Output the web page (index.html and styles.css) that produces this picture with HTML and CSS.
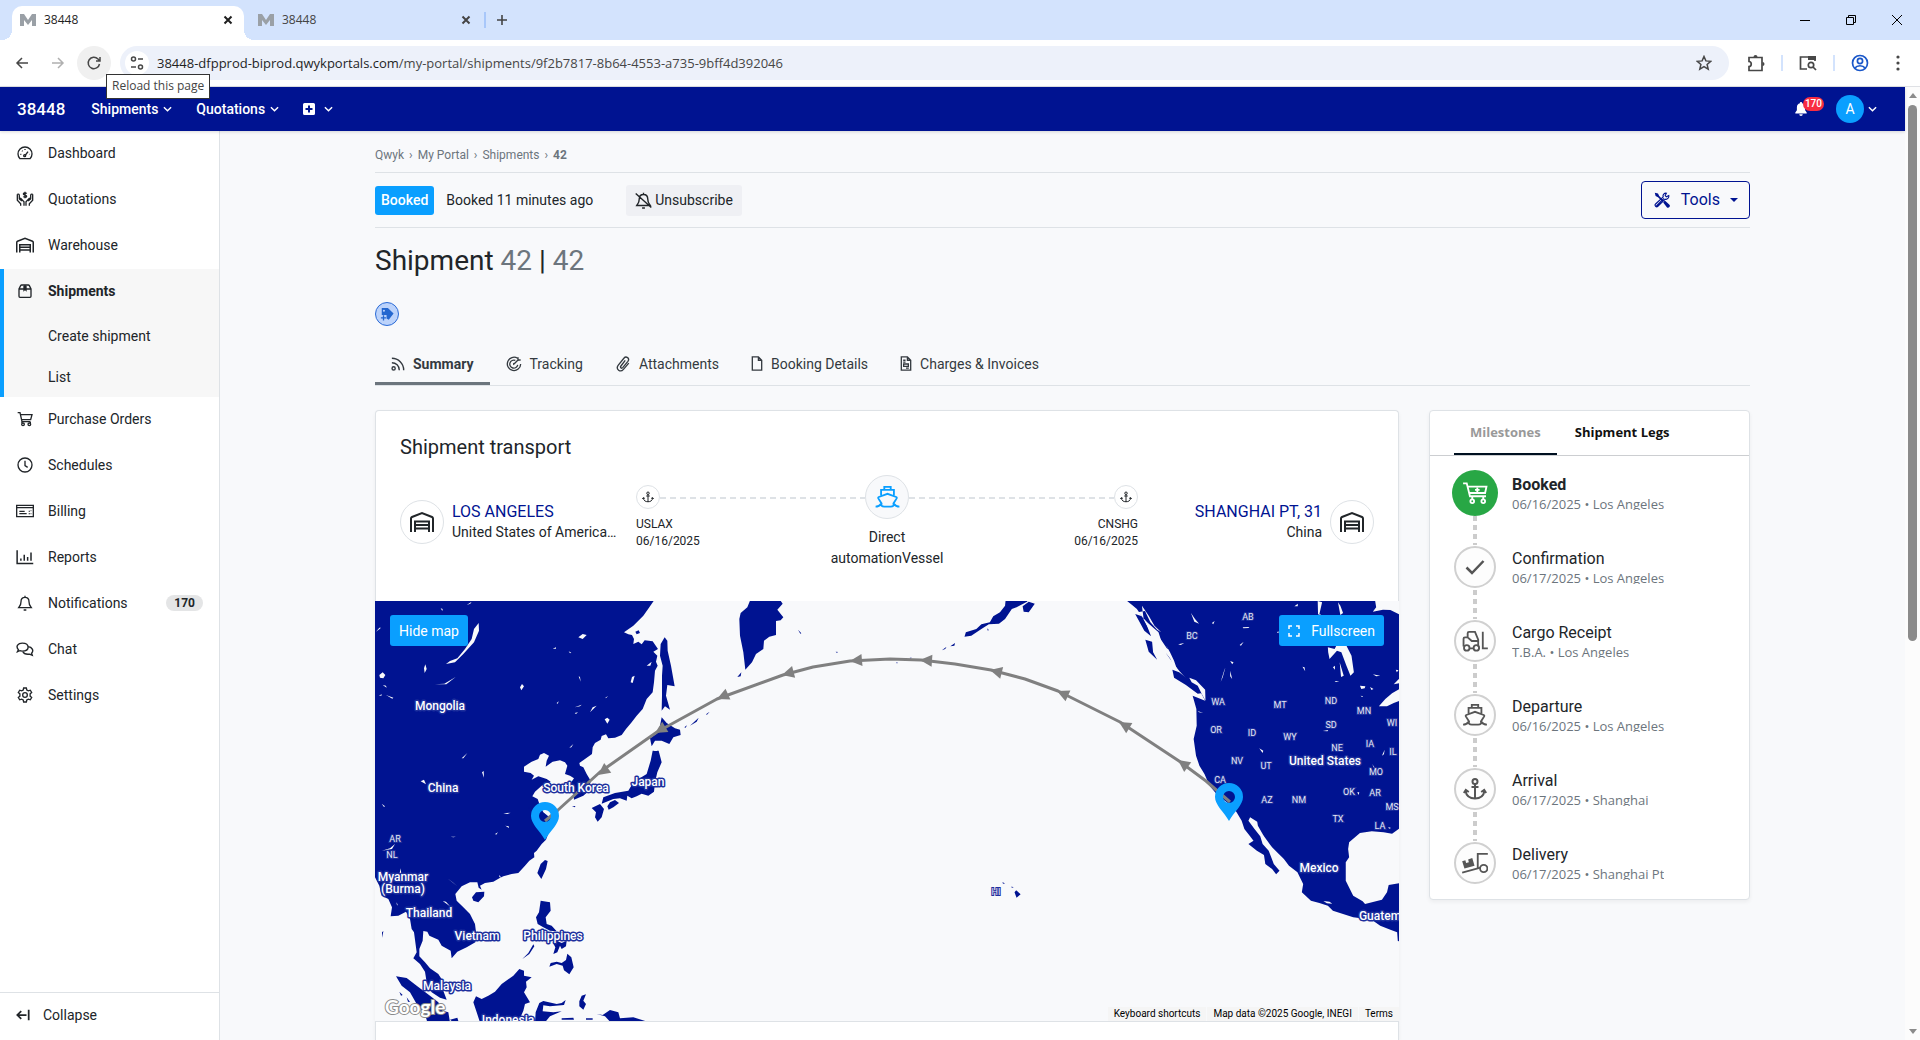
FILE: index.html
```html
<!DOCTYPE html>
<html lang="en">
<head>
<meta charset="utf-8">
<meta name="viewport" content="width=device-width, initial-scale=1">
<title>38448</title>
<link rel="stylesheet" href="styles.css">
</head>
<body>
<svg class="sprite" aria-hidden="true">
  <symbol id="i-favicon" viewBox="0 0 16 12"><path d="M0 12V0h4l4 6 4-6h4v12h-4V6l-4 5-4-5v6z" fill="currentColor"/></symbol>
  <symbol id="i-close" viewBox="0 0 10 10"><path d="M1.500 1.500l7 7M8.500 1.500l-7 7"/></symbol>
  <symbol id="i-plus" viewBox="0 0 12 12"><path d="M6 1v10M1 6h10"/></symbol>
  <symbol id="i-left" viewBox="0 0 16 16"><path d="M14 8H3M8 3L3 8l5 5"/></symbol>
  <symbol id="i-right" viewBox="0 0 16 16"><path d="M2 8h11M8 3l5 5-5 5"/></symbol>
  <symbol id="i-reload" viewBox="0 0 16 16"><path d="M13.500 9A5.700 5.700 0 1 1 12 4l1.500 1.500M14 2v4h-4"/></symbol>
  <symbol id="i-site" viewBox="0 0 16 16"><circle cx="4.500" cy="4" r="2"/><path d="M9 4h5M2 12h5"/><circle cx="11.500" cy="12" r="2"/></symbol>
  <symbol id="i-star" viewBox="0 0 16 16"><path d="M8 1.500l1.900 4.400 4.800.4-3.600 3.200 1.100 4.700L8 11.700l-4.200 2.500 1.100-4.700L1.300 6.300l4.800-.4z"/></symbol>
  <symbol id="i-puzzle" viewBox="0 0 18 18"><path d="M2 3.500h13V8v5 3.500H2v-4c3 0 3-5 0-5z"/><path d="M6.500 3a2 2 0 0 1 4 0zM15.500 8a2 2 0 0 1 0 4z" fill="currentColor" stroke="none"/></symbol>
  <symbol id="i-panel" viewBox="0 0 18 18"><path d="M8 15H1.500V3h14.500v4"/><path d="M9 2h8v4H9z" fill="currentColor" stroke="none"/><circle cx="12" cy="11" r="2.700"/><path d="M14 13l3 3"/></symbol>
  <symbol id="i-user" viewBox="0 0 18 18"><circle cx="9" cy="9" r="7.500"/><circle cx="9" cy="7" r="2.600"/><path d="M4 14c2-3 8-3 10 0"/></symbol>
  <symbol id="i-dots" viewBox="0 0 4 16"><g fill="currentColor" stroke="none"><circle cx="2" cy="2" r="1.600"/><circle cx="2" cy="8" r="1.600"/><circle cx="2" cy="14" r="1.600"/></g></symbol>
  <symbol id="i-min" viewBox="0 0 10 10"><path d="M0 5.500h10"/></symbol>
  <symbol id="i-restore" viewBox="0 0 10 10"><path d="M.5 2.500h7v7h-7zM2.500 2.500v-2h7v7h-2"/></symbol>
  <symbol id="i-x" viewBox="0 0 10 10"><path d="M0 0l10 10M10 0L0 10"/></symbol>
  <symbol id="i-chev" viewBox="0 0 10 6"><path d="M1 1l4 4 4-4"/></symbol>
  <symbol id="i-addbox" viewBox="0 0 12 12"><path fill-rule="evenodd" fill="currentColor" stroke="none" d="M1.500 0h9A1.500 1.500 0 0 1 12 1.500v9a1.500 1.500 0 0 1-1.500 1.500h-9A1.500 1.500 0 0 1 0 10.500v-9A1.500 1.500 0 0 1 1.500 0zM5 2.500V5H2.500v2H5v2.500h2V7h2.500V5H7V2.500z"/></symbol>
  <symbol id="i-bellfill" viewBox="0 0 14 16"><path fill="currentColor" stroke="none" d="M7 0a1.200 1.200 0 0 0-1.200 1.500C3.500 2 2.300 3.800 2.300 6v3.500L.5 12v1h13v-1l-1.800-2.500V6c0-2.200-1.200-4-3.500-4.500A1.200 1.200 0 0 0 7 0zM5 14a2 2 0 0 0 4 0z"/></symbol>
  <symbol id="i-gauge" viewBox="0 0 24 24"><path d="M4.500 20.500C3 19 1.500 16.500 1.500 13.500a10.500 10.500 0 0 1 21 0c0 3-1.500 5.500-3 7z"/><path d="M12 16l4.500-6"/><circle cx="11.500" cy="16" r="1.500"/><path d="M5 14h1.500M7.500 8.500l1 1M12 6v1.500M18.500 14h.5"/></symbol>
  <symbol id="i-hands" viewBox="0 0 27 24"><path d="M2 5v9l5 5v3M2 5c2-1 3 0 3 2v5l4 3M25 5v9l-5 5v3M25 5c-2-1-3 0-3 2v5l-4 3M5 12l2-1 5 5v6M22 12l-2-1-5 5v6"/><path d="M16 4c-1-1.500-5-1.500-5 .5s5 1.200 5 3.300-4 2.200-5 .5M13.500 1v10"/></symbol>
  <symbol id="i-ware" viewBox="0 0 24 20"><path d="M1 20V6.500Q1 5.500 2 5l10-4 10 4q1 .5 1 1.500V20"/><path d="M5 20V9.500h14V20M5 13h14M5 16.500h14"/></symbol>
  <symbol id="i-box" viewBox="0 0 24 24"><path d="M3 9v11q0 1.500 1.500 1.500h15q1.500 0 1.500-1.500V9l-2.500-5q-.5-1-1.500-1H7q-1 0-1.500 1zM3 9h18M12 3v6"/><path d="M9.500 4h5v9L12 11l-2.500 2z" fill="currentColor" stroke="none"/></symbol>
  <symbol id="i-cart" viewBox="0 0 24 24"><path d="M1 2.500h3.500l3 13.500h12.500M5.500 5.500H22.500l-2 7.500H7"/><circle cx="9" cy="20" r="2"/><circle cx="18.500" cy="20" r="2"/><path d="M7.500 16v2M20 16v2"/></symbol>
  <symbol id="i-cartplus" viewBox="0 0 28 24"><path d="M1 1.500h4l3.500 14H26M6 5h20.500L25 12H7.500"/><circle cx="11" cy="21" r="2"/><circle cx="23" cy="21" r="2"/><path d="M11 19V16M23 19V16M16.500 6v5M14 8.500h5"/></symbol>
  <symbol id="i-clock" viewBox="0 0 24 24"><circle cx="12" cy="12" r="10.500"/><path d="M12 5.500V13l4 2.500"/></symbol>
  <symbol id="i-bill" viewBox="0 0 27 19"><path d="M1 1h25v17H1zM1 4.500h25M5 10h8M5 13.500h11M20 9v1.500M20 13v1.500M22 9h1M22 13.500h1"/></symbol>
  <symbol id="i-chart" viewBox="0 0 24 20"><path d="M1.500 1v17.500H23M6.500 15v-3M11 15V7M15.500 15v-5M20 15V4"/></symbol>
  <symbol id="i-bell" viewBox="0 0 24 24"><path d="M12 3.500c-4 0-6 3-6 6.500 0 5-1.500 6-3.500 9h19c-2-3-3.500-4-3.500-9 0-3.500-2-6.500-6-6.500zM12 1v2.500M10 22.500h4"/></symbol>
  <symbol id="i-belloff" viewBox="0 0 24 24"><path d="M12 3.500c-4 0-6 3-6 6.500 0 5-1.500 6-3.500 9h19c-2-3-3.500-4-3.500-9 0-3.500-2-6.500-6-6.500zM12 1v2.500M10 22.500h4M1 2l22 20"/></symbol>
  <symbol id="i-chat" viewBox="0 0 26 20"><path d="M2 14l1.500-3C-1 6 3 1.500 9 1.500c5 0 8.500 2.500 8.500 6S14 13 9 13c-1.500 0-2.500 0-3.500-.5z"/><path d="M10 14c1 2.500 5 4 9.500 3.500l4 1.500-1-3c3.500-3.500 1-9-5-9.500"/></symbol>
  <symbol id="i-gear" viewBox="0 0 24 24"><circle cx="12" cy="12" r="3.500"/><path d="M10 1.500h4l.7 3 2.300 1.300 3-1 2 3.500-2.300 2v3.400l2.300 2-2 3.500-3-1-2.300 1.300-.7 3h-4l-.7-3L7 18.200l-3 1-2-3.500 2.300-2v-3.400L2 8.300l2-3.500 3 1 2.300-1.300z"/></symbol>
  <symbol id="i-collapse" viewBox="0 0 16 14"><path d="M12 7H1.500M6 2.500L1.500 7 6 11.500M14.500 1v12"/></symbol>
  <symbol id="i-tools" viewBox="0 0 20 20"><g fill="currentColor" stroke="none"><path d="M1 1l4 1 1.500 3L12 10.500 10.500 12 5 6.500 2 5z"/><path d="M11.500 13l2-2.500 5.500 5a2 2 0 0 1-3 3.500z"/></g><path d="M3 17.500L12.500 8M18.500 4.500l-3 1.500-1.500-1.500 1.500-3c-2.500-.5-5 2-4 4.500L2 15a1.800 1.800 0 0 0 2.800 2.800L14 9c2.500 1 5-2 4.500-4.500z"/></symbol>
  <symbol id="i-tag" viewBox="0 0 16 16"><path fill-rule="evenodd" fill="currentColor" stroke="none" d="M2 1h7l6.500 6.500L10 14.500 7.500 13V9H2zM4.500 3a1.200 1.200 0 1 0 0 2.400 1.200 1.200 0 0 0 0-2.400z"/><path stroke-width="1.500" d="M1 12.500h6M4 9.500v6"/></symbol>
  <symbol id="i-rss" viewBox="0 0 16 16"><path d="M1 1.500A13.500 13.500 0 0 1 14.500 15M1 6.500A8.500 8.500 0 0 1 9.500 15"/><circle cx="3" cy="13" r="1.800"/></symbol>
  <symbol id="i-target" viewBox="0 0 18 18"><path d="M13 2.500A7.500 7.500 0 1 0 16.500 9M10.500 5A4.500 4.500 0 1 0 13.200 10M9 9l4.500-4.500M9 9.800a1 1 0 0 1 0-1.600M13.500 4.500V1.500M13.500 4.500h3"/></symbol>
  <symbol id="i-clip" viewBox="0 0 16 18"><path d="M10.500 5L5.500 11.500c-1 1.500 1 3 2.200 1.600L13.500 6c2.500-3.500-2-6.500-4.500-3.500L2.500 10.500c-3 4.500 2.500 8.500 6 4.500L14.500 8"/></symbol>
  <symbol id="i-doc" viewBox="0 0 12 16"><path d="M1 1h6.500L11 4.500V15H1zM7.500 1v3.500H11"/></symbol>
  <symbol id="i-invoice" viewBox="0 0 12 16"><path d="M1 1h6.500L11 4.500V15H1zM7.500 1v3.500H11M3 4.500h2.500M3 6.500h2.500M3.500 8.500h5v2.500h-5zM6 13h3"/></symbol>
  <symbol id="i-ship" viewBox="0 0 28 24"><path d="M10.500 4V1h7v3M7 10V4.200h14V10M4.500 12L14 8.500 23.500 12q1 .5.500 1.500L20.500 19q1 3.500-3 3.500h-7q-4 0-3-3.500L4 13.500q-.5-1 .5-1.500zM1 22.500q4 0 6-3M27 22.500q-4 0-6-3"/></symbol>
  <symbol id="i-anchor" viewBox="0 0 24 22"><circle cx="12" cy="3.500" r="2.500"/><path d="M12 6v15M8.500 9h7M2.500 13C3.500 18.500 7 20.500 12 20.500s8.500-2 9.500-7.500M.8 15l2-3 3 2M23.200 15l-2-3-3 2"/></symbol>
  <symbol id="i-check" viewBox="0 0 20 16"><path d="M1.500 8.500L7 14 18.500 2"/></symbol>
  <symbol id="i-fork" viewBox="0 0 28 24"><circle cx="5" cy="19.500" r="3"/><circle cx="15.500" cy="19.500" r="3"/><path d="M8 20h4.500M1.500 18V9.500Q1.500 8 3 8h3V3.500Q6 2 7.500 2h6.500l3.500 8.500V18M6 8l4.500 4h7M22.500 2v18H28"/></symbol>
  <symbol id="i-dolly" viewBox="0 0 28 24"><path d="M0 22.500L20 17M17 17.500V2h11"/><circle cx="23.500" cy="18" r="4"/><path fill="currentColor" stroke="none" d="M0 10l3.500-1 .8 3 3-.8-.8-3L11 6.500l2.500 8.500-11 3z"/></symbol>
  <symbol id="i-expand" viewBox="0 0 12 12"><path d="M1 4V1h3M8 1h3v3M11 8v3H8M4 11H1V8"/></symbol>
</svg>

<header class="browser">
  <div class="tabstrip">
    <div class="btab active"><svg class="ic fav"><use href="#i-favicon"/></svg><span>38448</span><button class="ghost" aria-label="Close tab"><svg class="ic s10 heavy"><use href="#i-close"/></svg></button></div>
    <div class="btab"><svg class="ic fav"><use href="#i-favicon"/></svg><span>38448</span><button class="ghost" aria-label="Close tab"><svg class="ic s10 heavy"><use href="#i-close"/></svg></button></div>
    <button class="ghost newtab" aria-label="New tab"><svg class="ic s12"><use href="#i-plus"/></svg></button>
    <div class="winctl">
      <button class="ghost" aria-label="Minimize"><svg class="ic s10 thin"><use href="#i-min"/></svg></button>
      <button class="ghost" aria-label="Restore"><svg class="ic s10 thin"><use href="#i-restore"/></svg></button>
      <button class="ghost" aria-label="Close"><svg class="ic s10 thin"><use href="#i-x"/></svg></button>
    </div>
  </div>
  <div class="toolbar">
    <button class="round" aria-label="Back"><svg class="ic s16"><use href="#i-left"/></svg></button>
    <button class="round dim" aria-label="Forward"><svg class="ic s16"><use href="#i-right"/></svg></button>
    <div class="reload"><button class="round hover" aria-label="Reload"><svg class="ic s16"><use href="#i-reload"/></svg></button><span class="tooltip" role="tooltip">Reload this page</span></div>
    <div class="omnibox"><span class="site"><svg class="ic s16"><use href="#i-site"/></svg></span><span class="url"><b>38448-dfpprod-biprod.qwykportals.com</b>/my-portal/shipments/9f2b7817-8b64-4553-a735-9bff4d392046</span><button class="ghost" aria-label="Bookmark"><svg class="ic s16"><use href="#i-star"/></svg></button></div>
    <div class="exts">
      <svg class="ic s18"><use href="#i-puzzle"/></svg><i></i><svg class="ic s18"><use href="#i-panel"/></svg><i></i><svg class="ic s18 blue"><use href="#i-user"/></svg><svg class="ic dots"><use href="#i-dots"/></svg>
    </div>
  </div>
</header>

<div class="viewport">
  <div class="app">
    <nav class="topbar" aria-label="Main">
      <a class="brand" href="#">38448</a>
      <button class="navbtn">Shipments <svg class="ic chev"><use href="#i-chev"/></svg></button>
      <button class="navbtn">Quotations <svg class="ic chev"><use href="#i-chev"/></svg></button>
      <button class="navbtn wide" aria-label="Add"><svg class="ic s12"><use href="#i-addbox"/></svg><svg class="ic chev"><use href="#i-chev"/></svg></button>
      <button class="alerts" aria-label="Notifications"><svg class="ic s14"><use href="#i-bellfill"/></svg><span class="count">170</span></button>
      <button class="account" aria-label="Account"><span class="avatar">A</span><svg class="ic chev"><use href="#i-chev"/></svg></button>
    </nav>
    <div class="body">
      <aside class="side">
        <ul class="menu">
          <li><a href="#"><svg class="ic s18"><use href="#i-gauge"/></svg>Dashboard</a></li>
          <li><a href="#"><svg class="ic s18"><use href="#i-hands"/></svg>Quotations</a></li>
          <li><a href="#"><svg class="ic s18"><use href="#i-ware"/></svg>Warehouse</a></li>
          <li class="open"><a href="#"><svg class="ic s18 pkg"><use href="#i-box"/></svg>Shipments</a>
            <ul class="sub"><li><a href="#">Create shipment</a></li><li><a href="#">List</a></li></ul></li>
          <li><a href="#"><svg class="ic s18"><use href="#i-cart"/></svg>Purchase Orders</a></li>
          <li><a href="#"><svg class="ic s18 pkg"><use href="#i-clock"/></svg>Schedules</a></li>
          <li><a href="#"><svg class="ic s18"><use href="#i-bill"/></svg>Billing</a></li>
          <li><a href="#"><svg class="ic s18 pkg"><use href="#i-chart"/></svg>Reports</a></li>
          <li><a href="#"><svg class="ic s18 pkg"><use href="#i-bell"/></svg>Notifications<span class="pill">170</span></a></li>
          <li><a href="#"><svg class="ic s18"><use href="#i-chat"/></svg>Chat</a></li>
          <li><a href="#"><svg class="ic s18 pkg"><use href="#i-gear"/></svg>Settings</a></li>
        </ul>
        <button class="collapse"><svg class="ic s14"><use href="#i-collapse"/></svg>Collapse</button>
      </aside>
      <main class="content">
        <nav class="crumbs" aria-label="Breadcrumb"><a href="#">Qwyk</a><span>›</span><a href="#">My Portal</a><span>›</span><a href="#">Shipments</a><span>›</span><b>42</b></nav>
        <div class="status">
          <span class="badge">Booked</span><span class="when">Booked 11 minutes ago</span>
          <button class="unsub"><svg class="ic s18"><use href="#i-belloff"/></svg>Unsubscribe</button>
          <button class="tools"><svg class="ic s18"><use href="#i-tools"/></svg>Tools<span class="caret"></span></button>
        </div>
        <h1>Shipment <em>42</em> | <em>42</em></h1>
        <button class="tagbtn" aria-label="Add tag"><svg class="ic s14"><use href="#i-tag"/></svg></button>
        <nav class="tabs" aria-label="Shipment sections">
          <a class="on" href="#"><svg class="ic rss"><use href="#i-rss"/></svg>Summary</a>
          <a href="#"><svg class="ic s16"><use href="#i-target"/></svg>Tracking</a>
          <a href="#"><svg class="ic s16"><use href="#i-clip"/></svg>Attachments</a>
          <a href="#"><svg class="ic page"><use href="#i-doc"/></svg>Booking Details</a>
          <a href="#"><svg class="ic page"><use href="#i-invoice"/></svg>Charges &amp; Invoices</a>
        </nav>
        <div class="cols">
          <div class="left">
            <section class="card transport">
              <h2>Shipment transport</h2>
              <div class="route">
                <div class="place"><span class="ring"><svg class="ic s24"><use href="#i-ware"/></svg></span><div class="names"><a href="#">LOS ANGELES</a><p>United States of America…</p></div></div>
                <div class="legs">
                  <div class="stop"><span class="dot"><svg class="ic s12"><use href="#i-anchor"/></svg></span><p>USLAX<br>06/16/2025</p></div>
                  <i class="dash"></i>
                  <div class="vessel"><span class="ring"><svg class="ic s28"><use href="#i-ship"/></svg></span><p>Direct<br>automationVessel</p></div>
                  <i class="dash"></i>
                  <div class="stop end"><span class="dot"><svg class="ic s12"><use href="#i-anchor"/></svg></span><p>CNSHG<br>06/16/2025</p></div>
                </div>
                <div class="place end"><div class="names"><a href="#">SHANGHAI PT, 31</a><p>China</p></div><span class="ring"><svg class="ic s24"><use href="#i-ware"/></svg></span></div>
              </div>
              <div class="map">
                <svg class="world" viewBox="0 0 1024 420" preserveAspectRatio="xMidYMid slice" role="img" aria-label="Route from Los Angeles to Shanghai">
                  <g transform="translate(-5 -2) scale(.33333)">
                    <g class="land">
                      <path d="M0 0H855L838 25 820 50 790 80 762 100 775 106 786 108 792 120 790 135 805 128 815 136 824 124 848 127 864 150 850 158 862 170 858 188 863 200 855 215 852 250 848 280 830 300 818 330 800 350 785 370 768 390 755 408 735 416 715 418 708 406 695 411 692 422 675 432 668 445 666 465 645 480 628 492 630 500 640 505 650 525 662 545 657 575 640 590 612 602 610 580 600 555 612 538 600 530 585 525 592 500 585 490 570 484 548 488 527 503 530 485 537 470 522 462 510 467 505 480 485 488 462 503 462 518 482 522 492 530 485 542 505 532 530 540 542 548 515 560 495 578 487 592 503 600 510 620 520 640 545 660 540 690 528 722 515 735 500 755 492 762 493 775 478 785 465 800 445 822 425 825 400 832 388 838 370 848 345 852 330 860 335 872 326 866 322 850 300 850 275 862 256 885 260 905 280 925 300 945 315 975 318 1000 316 1030 290 1045 262 1058 245 1078 242 1055 215 1040 205 1022 178 1010 172 998 160 996 158 1025 148 1050 148 1072 165 1090 180 1108 205 1125 218 1145 218 1170 230 1202 210 1196 185 1180 170 1150 165 1118 150 1095 130 1078 140 1060 132 1000 125 990 120 960 108 938 85 950 62 952 66 925 55 900 35 890 28 860 15 835 0 800z"/>
                      <path d="M78 1132L110 1137 140 1160 180 1190 205 1210 218 1235 235 1240 240 1270H172L165 1245 140 1215 120 1180 95 1160zM310 1210L318 1192 335 1200 355 1190 375 1178 395 1155 430 1130 448 1110 462 1115 462 1130 485 1135 468 1148 470 1165 462 1180 480 1210 465 1215 460 1235 445 1270H330L320 1240zM495 1270L497 1240 508 1212 520 1206 560 1215 575 1212 587 1203 582 1218 540 1222 520 1219 518 1237 550 1240 575 1237 540 1252 525 1270zM680 1245L698 1248 720 1233 745 1240 750 1258 790 1255 832 1268H720L705 1252zM628 1207L635 1190 648 1186 640 1205 648 1215 640 1232 628 1222zM575 1258L610 1256 612 1262 575 1262zM648 1258L668 1258 668 1262 648 1262z"/>
                      <path d="M502 822L512 795 525 783 533 786 528 810 514 840zM306 895L318 880 343 878 342 892 325 910 310 905zM512 905L540 910 542 935 527 955 530 975 545 980 560 997 540 995 520 985 503 975 498 955 507 940zM538 1103L542 1092 560 1088 575 1092 588 1083 592 1064 604 1075 611 1105 598 1126 582 1114 578 1100 560 1095zM457 1080L475 1062 490 1036 493 1042 478 1065zM548 1030L560 1025 575 1032 590 1025 588 1042 575 1050 570 1040 562 1060 550 1065 556 1045zM88 1178l10 10-5 2zM110 1195l10 14-6-1zM36 1000l4-4-3 20zM240 1262L262 1256 265 1266 245 1266z"/>
                      <path d="M875 355L890 372 915 388 930 392 932 408 910 415 898 435 875 425 855 425 845 442 840 418 862 402 870 380zM848 455L866 455 875 490 862 520 855 550 852 578 835 590 815 584 800 592 785 598 772 590 770 605 750 598 730 600 695 614 700 595 735 582 775 575 790 550 830 525 842 485zM665 627L690 615 702 630 695 655 683 668 675 655 678 640zM712 622L720 610 735 603 747 612 730 625 716 632zM884 115L892 125 893 155 903 200 914 262 892 258 888 290 900 332 885 322 875 335 876 290 876 230 878 200 870 170 872 135zM606 622l10-1-1 4zM1142 0H1228L1238 14 1222 32 1240 55 1232 64 1218 66 1218 108 1198 113 1182 125 1180 150 1158 165 1146 190 1126 212 1120 160 1110 110 1108 60 1112 42 1132 25zM1102 234L1114 220 1112 232zM960 380l26-24-6 12zM943 385l8-6-4 7zM1008 346l11-8-8 9zM1284 92l10 11-3 1zM1397 158l8 1-5 2zM796 98l10-4 4 8-10 4zM475 625h4v3h-4z"/>
                    </g>
                    <g class="water">
                      <path d="M326 72L327 95 312 130 280 165 255 190 228 195 240 186 262 178 285 150 305 120 312 90zM28 228L38 220 46 228 40 238 30 236zM166 196L170 210 164 222 162 208zM195 256l28-2 34-20-28 22zM290 18l15-10-4 6zM212 28l6 2-1 6zM18 98l10-12 5 0-5 5zM38 258l10 2 2 6zM26 292l8-6 2 3zM48 288l22 8-3 3zM625 115L638 105 650 108 638 120zM450 265L456 255 462 262 454 274zM626 232l4 2 2 14zM548 149l10-4 0 4zM596 157l8 4-4 2zM782 250L786 234 794 230 788 252zM830 200l15-12-4 12zM614 325L635 317 630 322zM660 340L668 325 680 320zM704 361L712 356 719 362 712 374zM598 446l12-11-6 10zM614 342l10-2-6 5zM560 312l7-5-5 8zM706 296l8-5-6 7zM336 520l5-4 1 20zM275 478L292 462 280 478zM152 547L162 542 168 556zM400 643l22-2-10 4zM376 704l8-4-6 8zM406 680l10 2 1 5zM242 713l16 0-8 2zM36 755L60 748 75 735 66 750zM232 838L248 850 262 862zM218 906l10 2 12 14zM35 614l10 8-3 2zM92 808l2 18-5-4zM80 910l4 10-4-4zM850 452l8-4 4 8-8 0zM388 828l6 8-6-2z"/>
                    </g>
                  </g>
                  <g transform="translate(505 -2) scale(.338 .33333)">
                    <g class="land">
                      <path d="M372 0H440L435 8 404 25 390 30 370 60 352 74 322 76 300 90 270 110 250 113 254 100 285 90 300 76 325 70 335 52 355 40 370 20zM422 22L440 8 458 14 440 40 425 38zM183 154l14-11-4 7zM208 142l14-10-2 8zM48 190l6 2-5 1zM88 176l6 0-3 3zM317 88l5 5-3 2zM398 880L403 874 416 886 404 896zM362 850l8 3-6 1zM387 863l9 1-5 2z"/>
                      <path d="M724 0H1464L1468 25 1458 38 1488 32 1510 33 1540 48V686L1515 704 1490 700 1455 697 1420 702 1388 730 1385 750 1388 775 1378 790 1378 845 1400 890 1428 907 1435 915 1485 902 1500 880 1505 858 1540 852V1028L1532 1026 1530 1000 1510 992 1480 980 1460 966 1440 960 1400 955 1340 935 1325 920 1300 912 1275 905 1248 880 1252 855 1235 820 1210 800 1195 780 1180 765 1160 745 1135 710 1118 680 1116 668 1095 655 1090 665 1108 690 1125 712 1132 735 1150 755 1165 795 1182 815 1172 826 1160 810 1140 795 1136 768 1115 755 1090 735 1105 725 1092 708 1078 690 1070 665 1055 640 1040 620 1000 590 975 560 960 525 945 500 935 470 928 420 937 380 936 330 925 290 962 305 950 282 915 250 885 215 862 185 848 165 850 150 830 120 800 80 780 60 760 30z"/>
                      <path d="M865 212L885 220 930 255 955 282 940 284 905 258 870 236zM785 122L805 128 808 160 820 182 795 158zM755 45L775 52 790 80 802 112 782 95z"/>
                    </g>
                    <g class="water">
                      <path d="M740 12L762 40 784 36 800 70 820 92 832 100 812 80 795 50 775 20 780 60 800 100 834 132 824 100 790 70zM832 145L852 150 846 138 858 160 870 185 880 215 868 200 858 178zM915 236L935 244 962 272 963 305 952 285 940 260 922 250zM1540 268L1515 283 1495 300 1476 322 1500 322 1520 312 1540 304zM1535 240L1520 256 1540 252zM1295 6L1308 10 1300 45 1310 50 1296 46zM1355 10L1362 20 1370 42 1362 48zM1325 145L1345 150 1350 140 1380 140 1395 170 1402 220 1392 230 1380 200 1365 160 1352 155 1330 180 1326 160zM1360 190L1372 230 1364 234zM1340 205l6-5 0 12zM920 42L932 60 944 74 930 68zM982 72l8-6-4 10zM1073 85l20-1-3 3-15 1zM1064 138l12-10-8 12zM882 136l18-4-10 6zM1008 248L1018 215 1022 205 1014 235zM1036 186l10 4-4 6zM1036 215l6 25-6-8zM1250 203l6 2 2 12zM1420 260L1436 262 1434 268 1424 270zM1450 264l10 6-6 3zM1458 226l22 4-12 2zM1422 290l8 2-4 2zM1345 246l14 0-10 3zM1226 22l10-8 0 8zM1310 396l16-3-2 4zM1122 448L1134 455 1132 462zM1485 470l8-18-2 14zM1456 495l10 14-3 1zM1412 580l6 0-2 8zM1504 684l8 3-6 2zM1312 906L1330 908 1338 914 1322 913zM940 336l16 6-12-2zM1130 708l5 3-3 4zM1174 100l5-3 0 6zM1526 212l8 2-5 6z"/>
                    </g>
                  </g>
                  <polyline class="path" points="170,220 183,209 225,171 282,131 342,98 408,74 438,66 475,60 515,58 546,59 580,63 616,69 650,78 683,90 745,121 804,160 831,180 855,201"/>
                  <g class="heads">
                    <path d="M0 0l12-6v12z" transform="translate(223 174) rotate(-36)"/><path d="M0 0l12-6v12z" transform="translate(280 132) rotate(-31)"/><path d="M0 0l12-6v12z" transform="translate(342 98) rotate(-24)"/><path d="M0 0l12-6v12z" transform="translate(407 74) rotate(-15)"/><path d="M0 0l12-6v12z" transform="translate(475 60) rotate(-5)"/><path d="M0 0l12-6v12z" transform="translate(545 59) rotate(4)"/><path d="M0 0l12-6v12z" transform="translate(615 69) rotate(14)"/><path d="M0 0l12-6v12z" transform="translate(682 90) rotate(24)"/><path d="M0 0l12-6v12z" transform="translate(744 121) rotate(31)"/><path d="M0 0l12-6v12z" transform="translate(803 159) rotate(36)"/>
                  </g>
                  <g class="country">
                    <text x="65" y="109">Mongolia</text><text x="68" y="191">China</text><text x="201" y="191">South Korea</text><text x="273" y="185">Japan</text><text x="28" y="280">Myanmar</text><text x="28" y="292">(Burma)</text><text x="54" y="316">Thailand</text><text x="102" y="339">Vietnam</text><text x="178" y="339">Philippines</text><text x="72" y="389">Malaysia</text><text x="133" y="423">Indonesia</text><text x="950" y="164">United States</text><text x="944" y="271">Mexico</text><text x="1013" y="319">Guatemala</text>
                  </g>
                  <g class="state">
                    <text x="20" y="241">AR</text><text x="17" y="257">NL</text><text x="817" y="38">BC</text><text x="873" y="19">AB</text><text x="843" y="104">WA</text><text x="905" y="107">MT</text><text x="956" y="103">ND</text><text x="989" y="113">MN</text><text x="841" y="132">OR</text><text x="877" y="135">ID</text><text x="915" y="139">WY</text><text x="956" y="127">SD</text><text x="1017" y="125">WI</text><text x="962" y="150">NE</text><text x="995" y="146">IA</text><text x="1018" y="154">IL</text><text x="862" y="163">NV</text><text x="891" y="168">UT</text><text x="1001" y="174">MO</text><text x="845" y="182">CA</text><text x="974" y="194">OK</text><text x="1000" y="195">AR</text><text x="892" y="202">AZ</text><text x="924" y="202">NM</text><text x="1017" y="209">MS</text><text x="963" y="221">TX</text><text x="1005" y="228">LA</text><text x="621" y="294">HI</text>
                  </g>
                  <g class="pins"><path d="M170 239C165 230 156 223 156 215a14 14 0 0 1 28 0c0 8-9 15-14 24zM170 209a6 6 0 1 0 0 12 6 6 0 0 0 0-12z"/><path d="M854 220C849 211 840 204 840 196a14 14 0 0 1 28 0c0 8-9 15-14 24zM854 190a6 6 0 1 0 0 12 6 6 0 0 0 0-12z"/></g>
                  <text class="glogo" x="10" y="413">Google</text>
                </svg>
                <button class="mapbtn hide">Hide map</button>
                <button class="mapbtn full"><svg class="ic s12"><use href="#i-expand"/></svg>Fullscreen</button>
                <div class="legal"><button>Keyboard shortcuts</button><span>Map data ©2025 Google, INEGI</span><a href="#">Terms</a></div>
              </div>
            </section>
            <section class="card next"></section>
          </div>
          <section class="card milestones">
            <div class="mtabs"><button class="on">Milestones</button><button>Shipment Legs</button></div>
            <ol>
              <li class="done"><span class="mark"><svg class="ic s28"><use href="#i-cartplus"/></svg></span><div><h3>Booked</h3><p>06/16/2025 • Los Angeles</p></div></li>
              <li><span class="mark"><svg class="ic s20"><use href="#i-check"/></svg></span><div><h3>Confirmation</h3><p>06/17/2025 • Los Angeles</p></div></li>
              <li><span class="mark"><svg class="ic s28"><use href="#i-fork"/></svg></span><div><h3>Cargo Receipt</h3><p>T.B.A. • Los Angeles</p></div></li>
              <li><span class="mark"><svg class="ic s28"><use href="#i-ship"/></svg></span><div><h3>Departure</h3><p>06/16/2025 • Los Angeles</p></div></li>
              <li><span class="mark"><svg class="ic s24"><use href="#i-anchor"/></svg></span><div><h3>Arrival</h3><p>06/17/2025 • Shanghai</p></div></li>
              <li><span class="mark"><svg class="ic s28"><use href="#i-dolly"/></svg></span><div><h3>Delivery</h3><p>06/17/2025 • Shanghai Pt</p></div></li>
            </ol>
          </section>
        </div>
      </main>
    </div>
  </div>
  <div class="scroll" aria-hidden="true"><span class="up"></span><span class="thumb"></span><span class="down"></span></div>
</div>
</body>
</html>
```
FILE: styles.css
```css
:root {
  --navy: #001391;
  --sky: #0a9fff;
  --ink: #212529;
  --muted: #6c757d;
  --line: #dee2e6;
  --ui: "Open Sans", "Noto Sans", sans-serif;
}
* { box-sizing: border-box; }
html, body { height: 100%; }
body {
  margin: 0;
  display: flex;
  flex-direction: column;
  overflow: hidden;
  font: 14px/20px Roboto, sans-serif;
  color: var(--ink);
  background: #f8f9fb;
}
button { font: inherit; color: inherit; border: 0; background: none; padding: 0; cursor: pointer; }
a { color: inherit; text-decoration: none; }
h1, h2, h3, p, ul, ol { margin: 0; padding: 0; font-weight: 400; }
ul, ol { list-style: none; }

.sprite { position: absolute; width: 0; height: 0; }
.ic { display: block; flex: none; fill: none; stroke: currentColor; stroke-width: 2; overflow: visible; }
.s10 { width: 10px; height: 10px; }
.s12 { width: 12px; height: 12px; }
.s14 { width: 14px; height: 14px; }
.s16 { width: 16px; height: 16px; stroke-width: 1.5; }
.s18 { width: 18px; height: 18px; }
.s20 { width: 20px; height: 16px; stroke-width: 2.5; }
.s24 { width: 24px; height: 22px; }
.s28 { width: 28px; height: 24px; }
.thin { stroke-width: 1; }
.chev { width: 9px; height: 6px; stroke-width: 1.6; }
.page { width: 12px; height: 15px; stroke-width: 1.4; }
.rss { width: 14px; height: 14px; stroke-width: 1.6; }

/* browser window */
.browser { font: 12px/16px var(--ui); flex: none; }
.tabstrip { display: flex; align-items: flex-end; height: 40px; padding-left: 12px; background: #d3e3fd; }
.btab { display: flex; align-items: center; gap: 8px; width: 232px; height: 34px; padding: 0 11px 6px 8px; color: #444; }
.btab.active { position: relative; background: #fff; color: #1f1f1f; border-radius: 10px 10px 0 0; }
.btab.active::before, .btab.active::after { content: ""; position: absolute; bottom: 0; width: 10px; height: 10px; }
.btab.active::before { left: -10px; background: radial-gradient(circle at 0 0, transparent 10px, #fff 10px); }
.btab.active::after { right: -10px; background: radial-gradient(circle at 100% 0, transparent 10px, #fff 10px); }
.btab:nth-child(2) { margin-left: 6px; }
.btab span { flex: 1; }
.fav { width: 16px; height: 12px; color: #9aa0a6; stroke: none; }
.newtab { display: flex; align-items: center; height: 16px; margin: 0 0 12px 2px; padding-left: 10px; border-left: 2px solid #a8c7fa; color: #444; }
.newtab .ic { stroke-width: 1.6; }
.winctl { display: flex; gap: 36px; margin: 0 18px 15px auto; color: #000; }
.toolbar { display: flex; align-items: center; height: 47px; padding: 0 20px 1px 5px; border-bottom: 1px solid #dfe1e5; background: #fff; color: #474747; }
.round { display: grid; place-items: center; width: 34px; height: 34px; border-radius: 50%; }
.round.dim { color: #b0b0b0; margin-left: 2px; }
.round.hover { background: #f0f0f0; }
.reload { position: relative; margin: 0 9px 0 2px; }
.tooltip { position: absolute; left: 29px; top: 28px; z-index: 5; padding: 3px 5px 4px; border: 1px solid #333; background: #fff; color: #444; white-space: nowrap; }
.omnibox { display: flex; flex: 1; align-items: center; gap: 8px; height: 34px; padding: 0 17px 0 5px; border-radius: 17px; background: #edf1fa; }
.site { display: grid; place-items: center; width: 24px; height: 24px; border-radius: 50%; background: #fff; }
.url { flex: 1; font-size: 13px; white-space: nowrap; overflow: hidden; }
.url b { font-weight: 400; color: #1f1f1f; }
.exts { display: flex; align-items: center; gap: 16px; margin-left: 18px; }
.exts i { width: 2px; height: 16px; background: #d3e3fd; }
.exts .ic { stroke-width: 1.7; }
.exts .blue { color: #1a57c9; }
.exts .dots { width: 4px; height: 16px; margin-left: 11px; }

/* page shell */
.viewport { display: flex; flex: 1; min-height: 0; }
.app { display: flex; flex: 1; min-width: 0; flex-direction: column; }
.topbar { display: flex; align-items: center; height: 44px; padding: 0 28px 0 17px; background: var(--navy); color: #fff; font-weight: 500; flex: none; box-shadow: 0 1px 3px rgba(0, 0, 0, .15); z-index: 1; }
.brand { font-size: 17px; margin-right: 26px; }
.navbtn { display: flex; align-items: center; gap: 5px; margin-right: 24px; }
.navbtn.wide { gap: 9px; }
.alerts { display: flex; align-items: center; margin-left: auto; }
.count { align-self: flex-start; margin: 0 0 10px -5px; padding: 0 2px; border-radius: 8px; background: #f82d41; font-size: 10px; line-height: 14px; }
.account { display: flex; align-items: center; gap: 4px; margin-left: 12px; }
.avatar { width: 28px; line-height: 28px; border-radius: 50%; background: var(--sky); font-weight: 400; }
.body { display: flex; flex: 1; min-height: 0; }
.side { display: flex; flex-direction: column; width: 220px; border-right: 1px solid var(--line); background: #fff; flex: none; }
.menu { flex: 1; }
.menu a { display: flex; align-items: center; gap: 14px; height: 46px; padding: 0 16px 2px; }
.menu .pkg { width: 18px; height: 15px; }
.menu .s18 { height: 16px; }
.menu .open { border-left: 4px solid var(--sky); background: #f7f7f7; }
.menu .open > a { padding-left: 12px; font-weight: 700; }
.menu .sub a { height: 41px; padding: 0 0 0 44px; }
.pill { margin-left: auto; padding: 0 8px; border-radius: 8px; background: #e4e5e6; font-weight: 700; font-size: 12px; line-height: 16px; }
.menu .pill { min-width: 35px; text-align: center; }
.collapse { display: flex; align-items: center; gap: 13px; height: 48px; padding: 0 16px 3px; border-top: 1px solid var(--line); }
.scroll { display: flex; flex-direction: column; align-items: center; width: 15px; padding: 6px 0; background: #fcfcfc; }
.up, .down { border: 4px solid transparent; }
.up { border-top: 0; border-bottom: 5px solid #8b8b8b; }
.down { border-bottom: 0; border-top: 5px solid #8b8b8b; margin-top: auto; }
.thumb { width: 9px; height: 57%; margin-top: 7px; border-radius: 5px; background: #8b8b8b; }

/* shipment header */
.content { display: flex; flex: 1; flex-direction: column; min-width: 0; padding: 0 155px; }
.crumbs { display: flex; gap: 5px; padding: 14px 0 7px; border-bottom: 1px solid var(--line); font-size: 12px; color: var(--muted); }
.status { display: flex; align-items: center; gap: 12px; padding: 8px 0; border-bottom: 1px solid var(--line); }
.badge { padding: 0 6px; border-radius: 3px; background: var(--sky); color: #fff; line-height: 29px; font-weight: 500; }
.unsub { display: flex; align-items: center; gap: 3px; height: 31px; margin-left: 21px; padding: 0 9px; border-radius: 3px; background: #eff0f4; }
.unsub .s18 { width: 17px; height: 17px; }
.tools { display: flex; align-items: center; gap: 10px; height: 38px; margin-left: auto; padding: 0 11px; border: 1px solid var(--navy); border-radius: 4px; color: var(--navy); font-size: 16px; }
.tools .s18 { height: 16px; stroke-width: 1.4; }
.caret { border: 4px solid transparent; border-top-color: currentColor; border-bottom: 0; }
h1 { margin-top: 15px; font-size: 28px; line-height: 36px; }
h1 em { font-style: normal; color: var(--muted); }
.tagbtn { display: grid; place-items: center; width: 24px; height: 24px; margin-top: 23px; border: 1px solid #2b6bd6; border-radius: 50%; background: #bcd3fb; color: #2467cf; }
.tabs { display: flex; margin-top: 16px; border-bottom: 1px solid var(--line); color: #343a40; }
.tabs a { display: flex; align-items: center; gap: 8px; height: 43px; padding: 0 16px; }
.tabs .on { border-bottom: 3px solid var(--muted); padding-top: 3px; font-weight: 700; }

/* cards */
.cols { display: flex; flex: 1; min-height: 0; gap: 30px; margin-top: 24px; }
.left { display: flex; flex: 1; flex-direction: column; min-width: 0; }
.card { border: 1px solid var(--line); border-radius: 4px; background: #fff; box-shadow: 0 2px 4px rgba(0, 0, 0, .05); }
.transport { flex: none; border-bottom: 0; border-radius: 4px 4px 0 0; }
h2 { padding: 24px 24px 0; font-size: 20px; line-height: 24px; }
.route { display: grid; grid-template-columns: 236px 1fr 236px; align-items: center; padding: 16px 24px 32px; }
.place { display: flex; align-items: center; gap: 8px; min-width: 0; }
.place.end { justify-content: flex-end; text-align: right; }
.names { min-width: 0; }
.names a { font-size: 16px; color: var(--navy); }
.names p { white-space: nowrap; }
.ring { display: grid; place-items: center; width: 44px; height: 44px; border: 1px solid var(--line); border-radius: 50%; flex: none; background: #fff; }
.legs { display: flex; align-items: flex-start; }
.stop { display: flex; flex-direction: column; gap: 7px; width: 24px; margin-top: 10px; font-size: 12px; line-height: 17px; white-space: nowrap; }
.stop.end { align-items: flex-end; text-align: right; }
.dot { display: grid; place-items: center; width: 24px; height: 24px; border: 1px solid var(--line); border-radius: 50%; }
.dash { flex: 1; height: 2px; margin-top: 22px; background: repeating-linear-gradient(90deg, var(--line) 0 6px, transparent 6px 10px); }
.vessel { display: flex; flex-direction: column; align-items: center; gap: 8px; width: 44px; line-height: 21px; text-align: center; white-space: nowrap; }
.vessel .ring { background: #f8f9fb; color: var(--sky); }
.vessel .s28 { width: 27px; height: 22px; }

/* map */
.map { position: relative; height: 420px; margin: 0 -1px; overflow: hidden; background: #f8f9fb; }
.world { display: block; width: 100%; height: 100%; }
.land { fill: var(--navy); }
.water { fill: #f8f9fb; }
.path { fill: none; stroke: #808080; stroke-width: 3; stroke-linejoin: round; }
.heads { fill: #808080; }
.country, .state { fill: #fff; stroke: #1d2f9d; text-anchor: middle; paint-order: stroke; }
.country { font-size: 12px; font-weight: 500; stroke-width: 3px; stroke-linejoin: round; }
.state { font-size: 9px; stroke-width: 2px; fill: #e4e6f4; }
.pins { fill: var(--sky); fill-rule: evenodd; }
.glogo { font: 700 19px Lato, sans-serif; fill: #fff; stroke: #8a8a8a; stroke-width: 2px; paint-order: stroke; }
.mapbtn { position: absolute; top: 14px; display: flex; align-items: center; gap: 11px; height: 31px; padding: 0 9px; border-radius: 3px; background: var(--sky); color: #fff; }
.mapbtn .ic { stroke-width: 1.5; }
.hide { left: 15px; }
.full { right: 15px; }
.legal { position: absolute; right: 0; bottom: 0; display: flex; font-size: 10px; line-height: 14px; color: #000; gap: 1px; }
.legal > * { padding: 0 6px; background: #f5f5f5; line-height: 14px; }
.next { flex: 1; min-height: 0; border-bottom: 0; border-radius: 0; }

/* milestones */
.milestones { align-self: flex-start; width: 321px; flex: none; }
.mtabs { display: flex; gap: 2px; padding-left: 24px; border-bottom: 1px solid #ccced1; font: 700 13px/20px var(--ui); color: #111; }
.mtabs button { height: 44px; padding: 0 16px 2px; }
.mtabs .on { border-bottom: 2px solid #001020; padding-bottom: 0; color: #999; }
.milestones ol { padding: 14px 22px 13px; }
.milestones li { position: relative; display: flex; gap: 14px; height: 74px; }
.milestones li:last-child { height: 46px; }
.milestones li:not(:last-child)::after { content: ""; position: absolute; left: 21px; top: 46px; width: 4px; height: 29px; background: repeating-linear-gradient(#ccc 0 5px, transparent 5px 9px); }
.mark { display: grid; place-items: center; width: 42px; height: 42px; margin: 2px; border: 2px solid #d0d0d0; border-radius: 50%; background: #fdfdfd; color: #555; flex: none; }
.mark .s28 { width: 26px; height: 22px; }
.done .mark { width: 46px; height: 46px; margin: 0; border: 0; background: #28a745; color: #fff; }
h3 { margin-top: 5px; font-size: 16px; line-height: 20px; }
.done h3 { font-weight: 700; }
.milestones p { height: 15px; font: 13px/18px var(--ui); color: var(--muted); overflow: hidden; }
```
